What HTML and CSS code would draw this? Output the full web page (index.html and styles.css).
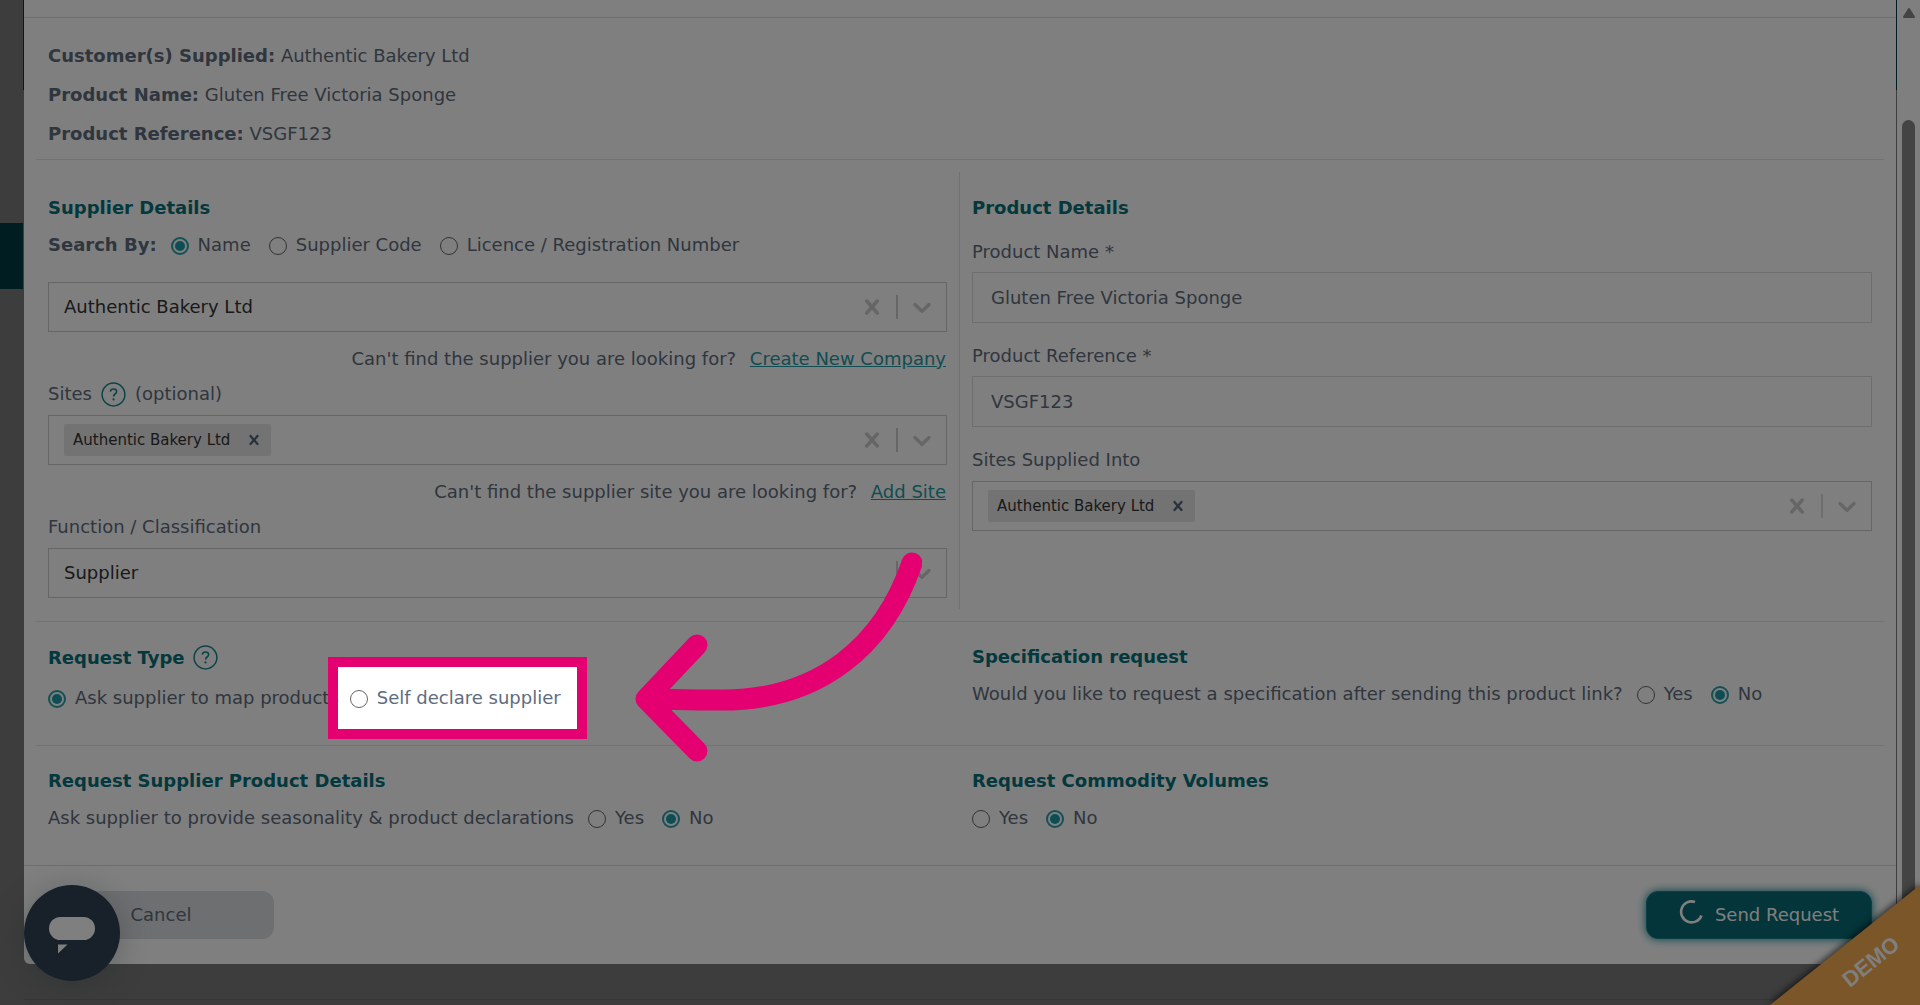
FILE: index.html
```html
<!DOCTYPE html>
<html lang="en">
<head>
    <meta charset="UTF-8">
    <meta name="viewport" content="width=device-width, initial-scale=1.0">
    <title>Send Product Link Request</title>
    <link rel="stylesheet" href="styles.css">
</head>
<body>
    <!-- Shared icons -->
    <svg class="icon-defs" aria-hidden="true">
        <symbol id="icon-cross" viewBox="0 0 20 20">
            <path d="M14.348 14.849c-0.469 0.469-1.229 0.469-1.697 0l-2.651-3.030-2.651 3.029c-0.469 0.469-1.229 0.469-1.697 0-0.469-0.469-0.469-1.229 0-1.697l2.758-3.15-2.759-3.152c-0.469-0.469-0.469-1.228 0-1.697s1.228-0.469 1.697 0l2.652 3.031 2.651-3.031c0.469-0.469 1.228-0.469 1.697 0s0.469 1.229 0 1.697l-2.758 3.152 2.758 3.15c0.469 0.469 0.469 1.229 0 1.698z"/>
        </symbol>
        <symbol id="icon-chevron" viewBox="0 0 20 20">
            <path d="M4.516 7.548c0.436-0.446 1.043-0.481 1.576 0l3.908 3.747 3.908-3.747c0.533-0.481 1.141-0.446 1.574 0 0.436 0.445 0.408 1.197 0 1.615-0.406 0.418-4.695 4.502-4.695 4.502-0.217 0.223-0.502 0.335-0.787 0.335s-0.57-0.112-0.789-0.335c0 0-4.287-4.084-4.695-4.502s-0.436-1.17 0-1.615z"/>
        </symbol>
        <symbol id="icon-help" viewBox="0 0 25 25">
            <circle cx="12.5" cy="12.5" r="11.4" fill="none" stroke="currentColor" stroke-width="1.5"/>
            <path d="M9.300 9.700c.2-1.700 1.500-2.700 3.200-2.700s3.100 1 3.100 2.600c0 1.200-.7 1.800-1.600 2.400-.9.700-1.400 1.200-1.400 2.500" fill="none" stroke="currentColor" stroke-width="1.600"/>
            <circle cx="12.500" cy="17.400" r="1.100" fill="currentColor"/>
        </symbol>
    </svg>

    <div class="sidebar">
        <div class="sidebar-active"></div>
    </div>

    <div class="page">
        <main class="modal">
            <div class="modal-header"></div>

            <section class="summary">
                <p><b>Customer(s) Supplied:</b> Authentic Bakery Ltd</p>
                <p><b>Product Name:</b> Gluten Free Victoria Sponge</p>
                <p><b>Product Reference:</b> VSGF123</p>
            </section>

            <section class="row details">
                <div class="col col-divided">
                    <h2>Supplier Details</h2>
                    <div class="options">
                        <b class="options-title">Search By:</b>
                        <label><input type="radio" name="searchBy" checked> Name</label>
                        <label><input type="radio" name="searchBy"> Supplier Code</label>
                        <label><input type="radio" name="searchBy"> Licence / Registration Number</label>
                    </div>
                    <div class="select-box select-first">
                        <select aria-label="Supplier">
                            <option>Authentic Bakery Ltd</option>
                        </select>
                        <button type="button" class="box-button" aria-label="Clear"><svg><use href="#icon-cross"/></svg></button>
                        <span class="separator"></span>
                        <span class="box-button"><svg><use href="#icon-chevron"/></svg></span>
                    </div>
                    <p class="helper">Can't find the supplier you are looking for? <a href="#">Create New Company</a></p>

                    <div class="field-label">
                        <label for="sites">Sites</label>
                        <svg class="help"><use href="#icon-help"/></svg>
                        <span>(optional)</span>
                    </div>
                    <div class="select-box">
                        <span class="chip">Authentic Bakery Ltd
                            <button type="button" aria-label="Remove"><svg><use href="#icon-cross"/></svg></button>
                        </span>
                        <input type="text" id="sites">
                        <button type="button" class="box-button" aria-label="Clear"><svg><use href="#icon-cross"/></svg></button>
                        <span class="separator"></span>
                        <button type="button" class="box-button" aria-label="Open"><svg><use href="#icon-chevron"/></svg></button>
                    </div>
                    <p class="helper">Can't find the supplier site you are looking for? <a href="#">Add Site</a></p>

                    <div class="field-label">
                        <label for="function">Function / Classification</label>
                    </div>
                    <div class="select-box">
                        <select id="function">
                            <option>Supplier</option>
                        </select>
                        <span class="separator"></span>
                        <span class="box-button"><svg><use href="#icon-chevron"/></svg></span>
                    </div>
                </div>

                <div class="col">
                    <h2>Product Details</h2>
                    <div class="field">
                        <label for="productName">Product Name *</label>
                        <input type="text" id="productName" class="text-input" value="Gluten Free Victoria Sponge">
                    </div>
                    <div class="field">
                        <label for="productReference">Product Reference *</label>
                        <input type="text" id="productReference" class="text-input" value="VSGF123">
                    </div>
                    <div class="field">
                        <label for="sitesInto">Sites Supplied Into</label>
                        <div class="select-box">
                            <span class="chip">Authentic Bakery Ltd
                                <button type="button" aria-label="Remove"><svg><use href="#icon-cross"/></svg></button>
                            </span>
                            <input type="text" id="sitesInto">
                            <button type="button" class="box-button" aria-label="Clear"><svg><use href="#icon-cross"/></svg></button>
                            <span class="separator light"></span>
                            <button type="button" class="box-button" aria-label="Open"><svg><use href="#icon-chevron"/></svg></button>
                        </div>
                    </div>
                </div>
            </section>

            <section class="row">
                <div class="col">
                    <h2>Request Type <svg class="help"><use href="#icon-help"/></svg></h2>
                    <div class="options request-type">
                        <label><input type="radio" name="requestType" checked> Ask supplier to map products</label>
                        <label class="spotlight"><input type="radio" name="requestType"> Self declare supplier</label>
                    </div>
                </div>
                <div class="col">
                    <h2>Specification request</h2>
                    <div class="options">
                        <span class="options-title">Would you like to request a specification after sending this product link?</span>
                        <label><input type="radio" name="specification"> Yes</label>
                        <label><input type="radio" name="specification" checked> No</label>
                    </div>
                </div>
            </section>

            <section class="row">
                <div class="col">
                    <h2>Request Supplier Product Details</h2>
                    <div class="options">
                        <span class="options-title">Ask supplier to provide seasonality &amp; product declarations</span>
                        <label><input type="radio" name="declarations"> Yes</label>
                        <label><input type="radio" name="declarations" checked> No</label>
                    </div>
                </div>
                <div class="col">
                    <h2>Request Commodity Volumes</h2>
                    <div class="options">
                        <label><input type="radio" name="volumes"> Yes</label>
                        <label><input type="radio" name="volumes" checked> No</label>
                    </div>
                </div>
            </section>

            <footer class="modal-footer">
                <button type="button" class="btn btn-cancel">Cancel</button>
                <button type="button" class="btn btn-send">
                    <svg class="spinner" viewBox="0 0 24 24"><path d="M16 1.900A10.500 10.500 0 1 0 22.500 15.500" fill="none" stroke="#fff" stroke-width="2.600"/></svg>
                    Send Request
                </button>
            </footer>
        </main>
        <div class="page-footer"></div>
    </div>

    <div class="scrollbar">
        <svg class="scroll-arrow" viewBox="0 0 12 10"><path d="M6 1L11 9H1z" fill="#888" stroke="#888" stroke-width="2" stroke-linejoin="round"/></svg>
        <div class="scroll-thumb"></div>
    </div>

    <button type="button" class="chat" aria-label="Open chat">
        <svg viewBox="0 0 48 40">
            <rect x="1" y="1" width="46" height="23" rx="11.500" fill="#fff"/>
            <path d="M10 28.500h9.500L10 37.500z" fill="#fff"/>
        </svg>
    </button>

    <div class="ribbon">
        <div class="ribbon-shape"><span>DEMO</span></div>
    </div>

    <svg class="arrow" viewBox="0 0 288 220">
        <path d="M278 16C250 98 186 154 86 153C56 153 30 152 12 152M63 98L12 152L63 204" fill="none" stroke="#e50072" stroke-width="21" stroke-linecap="round" stroke-linejoin="round"/>
    </svg>
</body>
</html>
```
FILE: styles.css
```css
* {
    box-sizing: border-box;
}
body {
    margin: 0;
    height: 100vh;
    display: flex;
    overflow: hidden;
    background: #7a7a7a;
    font-family: "DejaVu Sans", Verdana, sans-serif;
    font-size: 18px;
    line-height: 24px;
    color: #606c7d;
}
p, h2 {
    margin: 0;
}
button, input, select {
    font: inherit;
    color: inherit;
}
button {
    padding: 0;
    border: none;
    background: none;
    cursor: pointer;
}
.icon-defs {
    position: absolute;
    width: 0;
    height: 0;
}

/* Page behind the modal */
.sidebar {
    width: 23px;
    padding-top: 223px;
}
.sidebar-active {
    width: 24px;
    height: 66px;
    background: #003b43;
}
.page {
    flex: 1;
    display: flex;
    flex-direction: column;
    padding: 0 1px;
    background: linear-gradient(#003b43 90px, #7a7a7a 90px);
}
.page-footer {
    flex: 1;
    margin-top: 35px;
    border-top: 1px solid #6c6c6c;
}

/* Modal */
.modal {
    background: #fff;
    border-radius: 0 0 6px 6px;
}
.modal-header {
    height: 18px;
    border-bottom: 1px solid #dedede;
}
.summary {
    margin: 0 12px;
    padding: 18px 12px 6px;
    line-height: 39px;
}
.row {
    display: grid;
    grid-template-columns: 1fr 1fr;
    margin: 0 12px;
    padding: 23px 0 35px;
    border-top: 1px solid #e6e6e6;
}
.details {
    padding: 12px 0;
}
.details .col {
    padding-top: 24px;
    padding-bottom: 11px;
}
.col {
    padding: 0 12px;
}
.col-divided {
    border-right: 1px solid #e2e2e2;
}
h2 {
    display: flex;
    align-items: center;
    gap: 8px;
    font-size: 18px;
    font-weight: bold;
    color: #06717a;
}
.help {
    width: 25px;
    height: 25px;
    color: #168790;
}

/* Radio options */
.options {
    display: flex;
    align-items: center;
    gap: 18px;
    margin-top: 13px;
}
.options label {
    display: flex;
    align-items: center;
    gap: 9px;
    white-space: nowrap;
}
.options-title {
    margin-right: -4px;
}
input[type="radio"] {
    appearance: none;
    flex: none;
    width: 18px;
    height: 18px;
    margin: 2px 0 0;
    border: 1px solid #666;
    border-radius: 50%;
    background: #fff;
}
input[type="radio"]:checked {
    padding: 2px;
    border: 2px solid #2aa0aa;
    background: #1a9ba6 content-box;
}
.request-type {
    margin-top: 16px;
    gap: 11px;
}

/* Fields */
.field {
    margin-top: 20px;
}
.field + .field {
    margin-top: 21px;
}
.field label {
    display: block;
}
.field-label {
    display: flex;
    align-items: center;
    gap: 9px;
    height: 24px;
    margin-top: 11px;
}
.text-input {
    display: block;
    width: 100%;
    height: 51px;
    margin-top: 8px;
    padding: 0 18px;
    border: 1px solid #dcdcdc;
    background: #fff;
}
.select-box {
    display: flex;
    align-items: center;
    height: 50px;
    margin-top: 9px;
    padding-left: 15px;
    border: 1px solid #ccc;
    background: #fff;
    color: #333;
}
.select-first {
    margin-top: 25px;
}
.select-box select,
.select-box input {
    flex: 1;
    min-width: 0;
    padding: 0;
    border: none;
    outline: none;
    background: none;
    appearance: none;
}
.box-button {
    display: flex;
    padding: 9px;
}
.box-button svg {
    width: 30px;
    height: 30px;
    fill: #ccc;
}
.separator {
    width: 2px;
    height: 24px;
    background: #ccc;
}
.separator.light {
    background: #dcdcdc;
}
.chip {
    display: flex;
    align-items: center;
    gap: 14px;
    height: 32px;
    padding: 0 7px 0 9px;
    border-radius: 2px;
    background: #e6e6e6;
    font-size: 15px;
}
.chip button {
    display: flex;
}
.chip svg {
    width: 20px;
    height: 20px;
    fill: #56657a;
}
.helper {
    margin-top: 15px;
    padding-right: 1px;
    text-align: right;
}
.helper a {
    margin-left: 8px;
    color: #229aa3;
}

/* Footer */
.modal-footer {
    display: flex;
    justify-content: space-between;
    padding: 25px 24px;
    border-top: 1px solid #dedede;
}
.btn {
    display: flex;
    align-items: center;
    justify-content: center;
    gap: 12px;
    width: 226px;
    height: 48px;
    border-radius: 12px;
}
.btn-cancel {
    background: #dcdee3;
}
.btn-send {
    border: 1px solid #15838d;
    background: #066a74;
    color: #fff;
    box-shadow: 0 0 10px #06808a;
}
.spinner {
    width: 24px;
    height: 24px;
    margin-bottom: 6px;
}

/* Scrollbar */
.scrollbar {
    display: flex;
    flex-direction: column;
    align-items: center;
    width: 23px;
    padding-top: 8px;
    background: #fff;
}
.scroll-arrow {
    width: 12px;
    height: 10px;
}
.scroll-thumb {
    flex: 1;
    width: 13px;
    margin-top: 102px;
    border-radius: 7px 7px 0 0;
    background: #888;
}

/* Chat bubble and demo ribbon */
.chat {
    position: fixed;
    left: 24px;
    bottom: 24px;
    display: flex;
    align-items: center;
    justify-content: center;
    width: 96px;
    height: 96px;
    padding-top: 5px;
    border-radius: 50%;
    background: #304254;
    box-shadow: 0 4px 32px rgba(48, 66, 70, 0.3);
}
.chat svg {
    width: 48px;
    height: 40px;
}
.ribbon {
    position: fixed;
    right: 0;
    bottom: 0;
    filter: drop-shadow(-1px -2px 3px rgba(0, 0, 0, 0.6));
}
.ribbon-shape {
    display: flex;
    justify-content: flex-end;
    align-items: flex-end;
    width: 150px;
    height: 120px;
    padding: 0 16px 30px 0;
    background: #f4ac50;
    clip-path: polygon(100% 0, 100% 100%, 0 100%);
    color: #fff;
    font: bold 22px "Liberation Sans", Arial, sans-serif;
}
.ribbon-shape span {
    transform: rotate(-39deg);
}

/* Tour step: dims the page around one option */
.spotlight {
    position: relative;
}
.spotlight::after {
    content: "";
    position: absolute;
    z-index: 10;
    inset: -29px -26px -29px -22px;
    border: 10px solid #e50072;
    box-shadow: 0 0 0 3000px rgba(0, 0, 0, 0.5);
    pointer-events: none;
}
.arrow {
    position: absolute;
    z-index: 11;
    left: 634px;
    top: 547px;
    width: 288px;
    height: 220px;
    pointer-events: none;
}
```
